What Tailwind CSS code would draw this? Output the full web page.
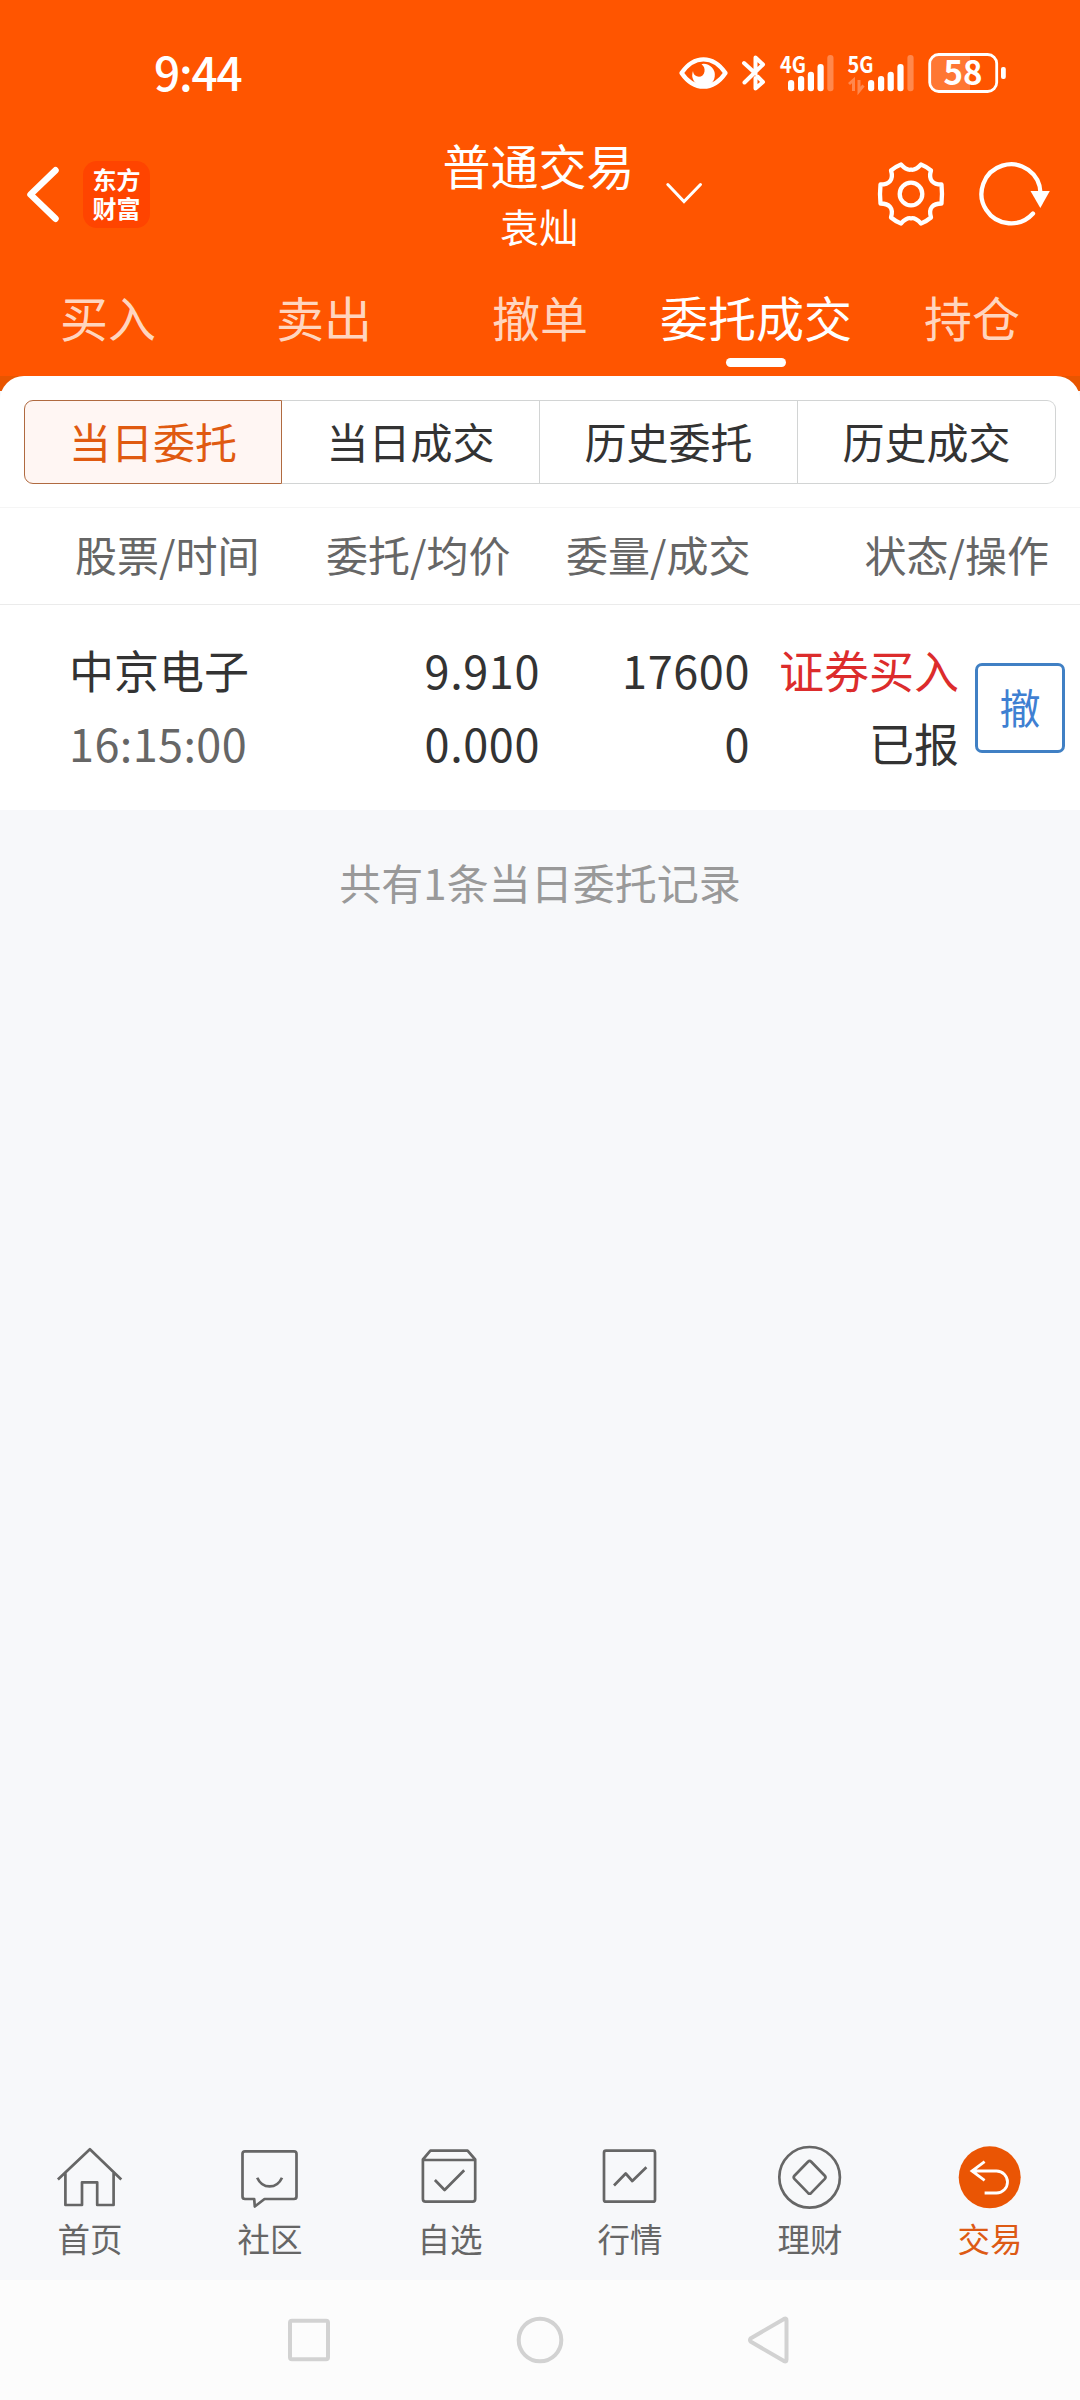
<!DOCTYPE html>
<html lang="zh-CN">

<head>
    <meta charset="UTF-8">
    <meta name="viewport" content="width=device-width, initial-scale=1.0">
    <title>普通交易 | 委托成交</title>
    <script src="https://cdn.jsdelivr.net/npm/@tailwindcss/browser@4"></script>
</head>

<body class="w-[1080px] h-[2400px] flex flex-col overflow-hidden whitespace-nowrap bg-[#f7f8fa] text-[#333] font-['Noto_Sans_CJK_SC',sans-serif]">

    <!-- Header -->
    <header class="h-[376px] shrink-0 bg-[#ff5500] text-white flex flex-col">

        <!-- Status bar -->
        <div class="h-[146px] shrink-0 flex items-center justify-between pl-[154px] pr-[72px]">
            <span class="text-[46px] leading-[60px] font-medium tracking-[-1.2px] -mt-1">9:44</span>
            <svg class="w-[332px] h-[80px]" viewBox="676 33 332 80" fill="none">
                <!-- eye -->
                <path d="M681.500 73C688 63.500 695 59.300 703.500 59.300S719 63.500 725.500 73C719 82.500 712 86.700 703.500 86.700S688 82.500 681.500 73Z" stroke="white" stroke-width="4.300" stroke-linejoin="round" />
                <path d="M703.500 63.800A11.300 11.300 0 1 1 693 71C693.500 78 703.500 79 704.500 71.500C705 68 703.800 66 701.500 64.200Z" fill="white" />
                <!-- bluetooth -->
                <path d="M744 63L755.500 73.500V57.500L763 64.500L744.500 82.500M755.500 78V88.500L763 82L757.500 76.500" stroke="white" stroke-width="4" stroke-linejoin="round" stroke-linecap="round" />
                <!-- sim 1 -->
                <text x="780" y="72.500" textLength="26" lengthAdjust="spacingAndGlyphs" fill="white" font-size="23" font-weight="700" font-family="Noto Sans CJK SC">4G</text>
                <g fill="white">
                    <rect x="788" y="80" width="6.200" height="11.300" rx="3" />
                    <rect x="798" y="76" width="6.200" height="15.300" rx="3" />
                    <rect x="807.800" y="71.700" width="6.200" height="19.600" rx="3" />
                    <rect x="817.500" y="64" width="6.200" height="27.300" rx="3" />
                    <rect x="827.300" y="55" width="6.200" height="36.300" rx="3" fill-opacity=".3" />
                </g>
                <!-- sim 2 -->
                <text x="847.500" y="72.500" textLength="26" lengthAdjust="spacingAndGlyphs" fill="white" font-size="23" font-weight="700" font-family="Noto Sans CJK SC">5G</text>
                <path d="M849 84L853.500 80V91M859 80V91L863.500 85.500" stroke="white" stroke-opacity=".3" stroke-width="3" />
                <g fill="white">
                    <rect x="868" y="80" width="6.200" height="11.300" rx="3" />
                    <rect x="878" y="76" width="6.200" height="15.300" rx="3" />
                    <rect x="887.600" y="71.700" width="6.200" height="19.600" rx="3" />
                    <rect x="897.400" y="64" width="6.200" height="27.300" rx="3" />
                    <rect x="907.400" y="55" width="6.200" height="36.300" rx="3" fill-opacity=".3" />
                </g>
                <!-- battery -->
                <path d="M970 56H938a7 7 0 0 0-7 7V83a7 7 0 0 0 7 7H970Z" fill="white" fill-opacity=".2" />
                <rect x="929.700" y="54.500" width="67" height="37" rx="9" stroke="white" stroke-width="2.800" />
                <rect x="1001" y="67" width="4.800" height="12" rx="2" fill="white" />
                <text x="963" y="85" text-anchor="middle" fill="white" font-size="33" font-weight="700" font-family="Noto Sans CJK SC">58</text>
            </svg>
        </div>

        <!-- Title -->
        <div class="h-[96px] shrink-0 flex items-center justify-between">
            <div class="w-[300px] flex items-center gap-[22px] pl-[25px]">
                <svg class="w-9 h-[60px]" viewBox="25 164 36 60" fill="none" stroke="white" stroke-width="6.500" stroke-linecap="round" stroke-linejoin="round">
                    <path d="M55.500 170.300L30.500 194.500L55.500 218.700" />
                </svg>
                <div class="size-[67px] rounded-[14px] bg-[#ff4400] text-[24px] leading-[29px] font-bold text-center pt-[3px]">东方<br>财富</div>
            </div>
            <div class="text-center relative">
                <p class="text-[48px] leading-[62px] -ml-[3px]">普通交易</p>
                <p class="text-[39px] leading-[60px] -ml-[2px]">袁灿</p>
                <svg class="absolute left-[219px] top-[48px] w-10 h-6" viewBox="664 181 40 24" fill="none" stroke="white" stroke-width="3" stroke-linecap="round">
                    <path d="M667.800 184.500L684 201.500L700.500 184.500" />
                </svg>
            </div>
            <div class="w-[300px] flex items-center justify-end gap-[31px] pr-[28px]">
                <svg class="size-[70px]" viewBox="-35 -35 70 70" fill="none" stroke="white" stroke-width="4.300" stroke-linejoin="round">
                    <path d="M-10-29.500C-4-23-1-24.300 0-24.300S4-23 10-29.500C14-28 17-26 20-23.500C17-14 22-9.500 30.500-9.500Q31.500 0 30.500 9.500C22 9.500 17 14 20 23.500C17 26 14 28 10 29.500C4 23 1 24.300 0 24.300S-4 23-10 29.500C-14 28-17 26-20 23.500C-17 14-22 9.500-30.500 9.500Q-31.500 0-30.500-9.500C-22-9.500-17-14-20-23.500C-17-26-14-28-10-29.500Z" />
                    <circle r="11.300" />
                </svg>
                <svg class="w-[75px] h-[70px]" viewBox="977 159 75 70" fill="none">
                    <path d="M1033 213.500A29.500 29.500 0 1 1 1040.500 193" stroke="white" stroke-width="4.300" stroke-linecap="round" />
                    <path d="M1030.500 191H1049.800L1040.300 208Z" fill="white" />
                </svg>
            </div>
        </div>

        <!-- Tabs -->
        <nav class="h-[134px] grid grid-cols-5 text-center text-[48px] leading-[60px] pt-[44px] text-[#ffd5bf]">
            <a>买入</a>
            <a>卖出</a>
            <a>撤单</a>
            <a class="text-white flex flex-col items-center">委托成交
                <span class="w-[60px] h-[9px] rounded-full bg-white mt-3"></span>
            </a>
            <a>持仓</a>
        </nav>
    </header>
    <div class="h-[15px] shrink-0 bg-[#e85500]"></div>

    <!-- Orders -->
    <main class="flex-1 -mt-[15px]">
        <div class="bg-white rounded-t-[24px]">
            <div class="h-[132px] px-6 pt-6 border-b border-[#f5f5f5]">
                <div class="h-[84px] grid grid-cols-4 text-center text-[42px] leading-[79px]">
                    <a class="border border-[#b06a40] rounded-l-[9px] bg-[#fff6f3] text-[#e05a10]">当日委托</a>
                    <a class="border-y border-r border-[#d2d4d4]">当日成交</a>
                    <a class="border-y border-r border-[#d2d4d4]">历史委托</a>
                    <a class="border-y border-r border-[#d2d4d4] rounded-r-[9px]">历史成交</a>
                </div>
            </div>

            <div class="h-[97px] flex pl-[75px] pr-[31px] border-b border-[#ebebeb] text-[42px] leading-[92px] text-[#666]">
                <span class="w-[185px]">股票/时间</span>
                <span class="w-[185px] ml-[66px]">委托/均价</span>
                <span class="w-[185px] ml-[55px]">委量/成交</span>
                <span class="ml-auto">状态/操作</span>
            </div>

            <div class="h-[205px] flex items-center text-[45px] leading-[73px] pl-[69px] pr-[15px]">
                <div class="w-[231px] -mt-1">
                    <p>中京电子</p>
                    <p class="text-[#666] tracking-[0.4px]">16:15:00</p>
                </div>
                <div class="w-[240px] text-right -mt-1 tracking-[0.6px]">
                    <p>9.910</p>
                    <p>0.000</p>
                </div>
                <div class="w-[210px] text-right -mt-1 tracking-[0.6px]">
                    <p>17600</p>
                    <p>0</p>
                </div>
                <div class="w-[209px] text-right -mt-1">
                    <p class="text-[#dc2c2c]">证券买入</p>
                    <p>已报</p>
                </div>
                <button class="size-[90px] ml-auto border-3 border-[#4080c4] rounded-[7px] text-[41px] leading-[80px] text-[#3f80d2] pb-1">撤</button>
            </div>
        </div>

        <p class="text-center text-[42px] leading-[60px] text-[#999] mt-[42px]">共有1条当日委托记录</p>
    </main>

    <!-- Bottom nav -->
    <nav class="h-[140px] shrink-0 grid grid-cols-6 text-center text-[32.5px] leading-[51px] text-[#666]">
        <a class="flex flex-col items-center">
            <svg class="size-[72px]" viewBox="0 0 72 72" fill="none" stroke="#666" stroke-width="2.700" stroke-linejoin="round">
                <path d="M3.900 39.500L35.900 9.200L67.300 39.500M11.400 33V65H28V42.300H43.200V65H59.600V33" />
            </svg>
            <span>首页</span>
        </a>
        <a class="flex flex-col items-center">
            <svg class="size-[72px]" viewBox="0 0 72 72" fill="none" stroke="#666" stroke-width="2.700" stroke-linejoin="round">
                <path d="M11 11.300H60a2.500 2.500 0 0 1 2.500 2.500V56.500a2.500 2.500 0 0 1-2.500 2.500H30.500L20.800 66.500L20.200 59H11a2.500 2.500 0 0 1-2.500-2.500V13.800a2.500 2.500 0 0 1 2.500-2.500Z" />
                <path d="M23.200 37.700C28.500 49.300 42.700 49.300 48 37.700" />
            </svg>
            <span>社区</span>
        </a>
        <a class="flex flex-col items-center">
            <svg class="size-[72px]" viewBox="0 0 72 72" fill="none" stroke="#666" stroke-width="2.700" stroke-linejoin="round">
                <path d="M8.900 19.500L16.400 10.700H53.600L61.200 19.500V59a2.700 2.700 0 0 1-2.700 2.700H11.600a2.700 2.700 0 0 1-2.700-2.700ZM8.900 20H61.200M20.900 40L30.600 50L50.200 30.300" />
            </svg>
            <span>自选</span>
        </a>
        <a class="flex flex-col items-center">
            <svg class="size-[72px]" viewBox="0 0 72 72" fill="none" stroke="#666" stroke-width="2.700" stroke-linejoin="round">
                <rect x="10" y="10.700" width="51" height="51" rx="2" />
                <path d="M20 45.500L31.700 33.500L38.300 41L52.400 27.300" />
            </svg>
            <span>行情</span>
        </a>
        <a class="flex flex-col items-center">
            <svg class="size-[72px]" viewBox="0 0 72 72" fill="none" stroke="#666" stroke-width="2.700" stroke-linejoin="round">
                <circle cx="35.600" cy="37.300" r="30.300" />
                <path d="M34 21.700Q35.600 20.200 37.200 21.700L50.800 35.700Q52.200 37.300 50.800 38.900L37.200 52.900Q35.600 54.400 34 52.900L20.400 38.900Q19 37.300 20.400 35.700Z" />
            </svg>
            <span>理财</span>
        </a>
        <a class="flex flex-col items-center text-[#dd5a14]">
            <svg class="size-[72px]" viewBox="0 0 72 72" fill="none">
                <circle cx="35.700" cy="37.300" r="31" fill="#ea5504" />
                <path d="M30.600 21.700L18 31L30.600 40.300M18 31H42.500A11 11 0 0 1 42.500 53H30.600" stroke="white" stroke-width="2.800" />
            </svg>
            <span>交易</span>
        </a>
    </nav>

    <!-- System navigation -->
    <div class="h-[120px] shrink-0 bg-[#fcfcfc] flex items-center justify-center">
        <svg class="w-[520px] h-[60px]" viewBox="280 2310 520 60" fill="none" stroke="#d2d2d2" stroke-width="4" stroke-linejoin="round">
            <rect x="290" y="2320.700" width="38" height="38.500" rx="2" />
            <circle cx="540" cy="2340" r="21.300" />
            <path d="M750.500 2338.500L784 2318.900Q786.500 2317.900 786.500 2320.500V2359.500Q786.500 2362.100 784 2361.100L750.500 2341.500Q749.500 2340 750.500 2338.500Z" />
        </svg>
    </div>

</body>

</html>
